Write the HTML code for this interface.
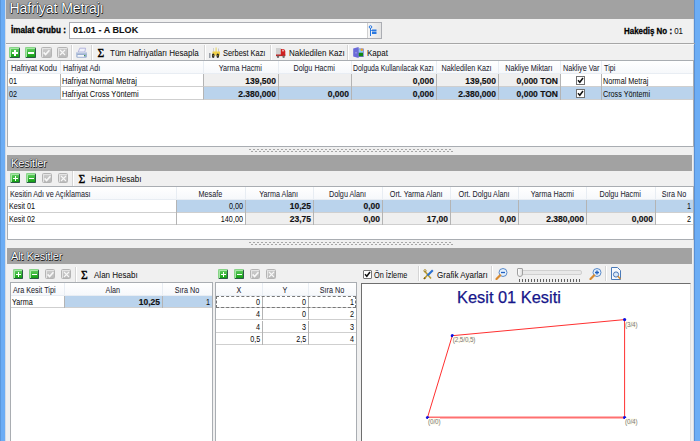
<!DOCTYPE html>
<html><head><meta charset="utf-8">
<style>
*{margin:0;padding:0;box-sizing:border-box}
html,body{width:700px;height:441px;overflow:hidden;background:#f0f0f0;font-family:"Liberation Sans",sans-serif;font-size:8px;color:#000}
body{position:relative}
.a{position:absolute}
.sx{display:inline-block}
.t{position:absolute;white-space:nowrap;line-height:11px;font-size:9.5px;color:#111;-webkit-text-stroke:0.05px #111}
.g{position:absolute;white-space:nowrap;line-height:10px;font-size:8.8px;color:#0a0a0a;-webkit-text-stroke:0.02px #000}
.gb{position:absolute;white-space:nowrap;line-height:10px;font-size:8.5px;font-weight:bold;color:#111;-webkit-text-stroke:0.15px #111}
.hd{position:absolute;white-space:nowrap;line-height:10px;font-size:8.8px;color:#1e1e30;-webkit-text-stroke:0.05px #1e1e30}
.bar{position:absolute;background:#a2a2a2;color:#fff;padding-left:3px;text-shadow:0 0 1px #101018,0 0 1px #101018,0.5px 0.5px 0.5px #202020}
.ic{position:absolute;width:11px;height:11px;border-radius:1.5px}
.ic i{position:absolute;background:#fff;display:block}
.plus{background:linear-gradient(#62d062,#139f13);border:1px solid;border-color:#86d486 #2c5a48 #2c5a48 #86d486;box-shadow:inset 1px 1px 0 #a8e6a8}
.gray{background:linear-gradient(#cdcdcd,#bababa);border:1px solid #b4b4b4;box-shadow:inset 1px 1px 0 #e4e4e4}
.cb{position:absolute;width:9px;height:9px;background:#fff;border:1px solid #707070}
</style></head><body>

<div class="a" style="left:0px;top:0px;width:5px;height:441px;background:#6cadf5;border-left:1px solid #5c98dc"></div>
<div class="a" style="left:5px;top:0px;width:1px;height:441px;background:#d4dce6"></div>
<div class="a" style="left:693px;top:0px;width:1px;height:441px;background:#d8dde3"></div>
<div class="a" style="left:694px;top:0px;width:6px;height:441px;background:#6cadf5;border-left:1px solid #5a90d4"></div>
<div class="bar" style="left:6px;top:0px;width:688px;height:19px;line-height:17px;font-size:14px;letter-spacing:-0.05px;padding-left:3.5px">Hafriyat Metrajı</div>
<div class="gb" style="left:11px;top:25px;font-size:9px;line-height:11px;color:#000;-webkit-text-stroke:0.35px #000"><span class="sx" style="transform:scaleX(0.9);transform-origin:0 0">İmalat Grubu :</span></div>
<div class="a" style="left:69px;top:22px;width:313px;height:17px;background:#fff;border:1px solid #abadb3"></div>
<div class="gb" style="left:72.5px;top:24px;font-size:9.5px;line-height:11px;color:#111;-webkit-text-stroke:0.12px #111;letter-spacing:0.05px;font-weight:bold"><span class="sx" style="transform:scaleX(0.95);transform-origin:0 0">01.01 - A BLOK</span></div>
<div class="a" style="left:367px;top:23px;width:14px;height:15px;background:linear-gradient(90deg,#f6f6f6,#e4e4e4);border-left:1px solid #d0d0d0"></div>
<svg class="a" style="left:368px;top:25px" width="10" height="12" viewBox="0 0 10 12"><circle cx="2.5" cy="2" r="1.3" fill="none" stroke="#2a78e0" stroke-width="1"/><path d="M2.5 3 V11" stroke="#2a78e0" stroke-width="1"/><rect x="4" y="4.5" width="4.5" height="2" fill="#2a78e0"/><rect x="4" y="7" width="4.5" height="2" fill="#2a78e0"/><path d="M2.5 5.5 H4" stroke="#2a78e0" stroke-width="0.8"/></svg>
<div class="t" style="left:483.5px;width:200px;text-align:right;top:26px;font-size:9px"><span class="sx" style="transform:scaleX(0.88);transform-origin:100% 0"><b style="-webkit-text-stroke:0.3px #000;color:#000">Hakediş No :</b> 01</span></div>
<div class="a" style="left:6px;top:43px;width:689px;height:1px;background:#a6a6a6"></div>
<div class="a" style="left:6px;top:44px;width:688px;height:1px;background:#f8f8f8"></div>
<div class="ic plus" style="left:9px;top:47px;width:11px;height:11px"><i style="left:2.15px;top:4.0px;width:5.7px;height:2px"></i><i style="left:4.0px;top:2.15px;width:2px;height:5.7px"></i></div>
<div class="ic plus" style="left:25px;top:47px;width:11px;height:11px"><i style="left:2.15px;top:4.0px;width:5.7px;height:2px"></i></div>
<div class="ic gray" style="left:41px;top:47px;width:11px;height:11px"><svg width="9" height="9" viewBox="0 0 9 9" style="position:absolute;left:0;top:0"><path d="M1.6 4.4 L3.6 6.6 L7.4 2.2" stroke="#f7f7f7" stroke-width="1.6" fill="none"/></svg></div>
<div class="ic gray" style="left:57px;top:47px;width:11px;height:11px"><svg width="9" height="9" viewBox="0 0 9 9" style="position:absolute;left:0;top:0"><path d="M2 2 L7 7 M7 2 L2 7" stroke="#f7f7f7" stroke-width="1.1" fill="none"/></svg></div>
<div class="a" style="left:71px;top:45px;width:1px;height:15px;background:#d5d5d5"></div>
<div class="a" style="left:72px;top:45px;width:1px;height:15px;background:#fff"></div>
<svg class="a" style="left:76px;top:47px" width="11" height="11" viewBox="0 0 11 11"><path d="M2.2 5 L3.8 1.2 H9.6 L8.8 5 Z" fill="#eef0fa" stroke="#a8a8d8" stroke-width="0.8"/><rect x="0.3" y="5" width="10.6" height="5.8" rx="1.2" fill="#9aaed0"/><rect x="1.5" y="8" width="6.5" height="1.8" fill="#f4f6fa"/><rect x="8" y="8" width="1.2" height="1" fill="#40a040"/><rect x="0.3" y="5" width="10.6" height="1.5" fill="#c8d2e6"/></svg>
<div class="a" style="left:91px;top:45px;width:1px;height:15px;background:#d5d5d5"></div>
<div class="a" style="left:92px;top:45px;width:1px;height:15px;background:#fff"></div>
<div class="a" style="left:97.5px;top:47px;font-family:'Liberation Serif',serif;font-size:11.5px;line-height:12px;color:#000;-webkit-text-stroke:0.35px #000">Σ</div>
<div class="t" style="left:110px;top:47px;"><span class="sx" style="transform:scaleX(0.845);transform-origin:0 0">Tüm Hafriyatları Hesapla</span></div>
<div class="a" style="left:204px;top:45px;width:1px;height:15px;background:#d5d5d5"></div>
<div class="a" style="left:205px;top:45px;width:1px;height:15px;background:#fff"></div>
<svg class="a" style="left:209px;top:47px" width="12" height="11" viewBox="0 0 12 11"><rect x="6.5" y="0.5" width="1.2" height="5" fill="#e8d870"/><rect x="4" y="1" width="1" height="4" fill="#d0d0d0"/><rect x="9" y="1.5" width="1" height="4" fill="#c8c8c8"/><rect x="3.5" y="4.5" width="7.5" height="4" fill="#f0d048"/><rect x="0" y="6" width="1.5" height="5" fill="#9aa0a8"/><ellipse cx="4.2" cy="8.8" rx="1.3" ry="2.2" fill="#222"/><ellipse cx="8.8" cy="8.8" rx="1.3" ry="2.2" fill="#222"/><circle cx="4.2" cy="8.8" r="0.5" fill="#e8c840"/><circle cx="8.8" cy="8.8" r="0.5" fill="#e8c840"/></svg>
<div class="t" style="left:223px;top:47px;"><span class="sx" style="transform:scaleX(0.78);transform-origin:0 0">Serbest Kazı</span></div>
<div class="a" style="left:270px;top:45px;width:1px;height:15px;background:#d5d5d5"></div>
<div class="a" style="left:271px;top:45px;width:1px;height:15px;background:#fff"></div>
<svg class="a" style="left:276px;top:48px" width="10" height="10" viewBox="0 0 10 10"><rect x="0" y="0" width="5.2" height="7" fill="#d0d0d0"/><path d="M4.8 1 H8 L9.3 3 V7.5 H4.8 Z" fill="#d02020"/><rect x="6.3" y="1.6" width="1.4" height="1.8" fill="#f0e0e0"/><rect x="0" y="6.5" width="9.3" height="1.6" fill="#c02020"/><circle cx="2" cy="8.8" r="1.2" fill="#707070"/><circle cx="7.6" cy="8.8" r="1.2" fill="#707070"/></svg>
<div class="t" style="left:288.5px;top:47px;"><span class="sx" style="transform:scaleX(0.845);transform-origin:0 0">Nakledilen Kazı</span></div>
<div class="a" style="left:347px;top:45px;width:1px;height:15px;background:#d5d5d5"></div>
<div class="a" style="left:348px;top:45px;width:1px;height:15px;background:#fff"></div>
<svg class="a" style="left:353px;top:47px" width="11" height="11" viewBox="0 0 11 11"><path d="M0.2 1.5 L5.6 0 V11 L0.2 9.5 Z" fill="#6a6ad8"/><rect x="5.2" y="1.5" width="5.5" height="8.5" fill="#6a70c8"/><rect x="5.8" y="2.2" width="4.2" height="3.6" fill="#8cc8f0"/><circle cx="8.8" cy="2.8" r="1.2" fill="#f0a020"/><rect x="5.8" y="5.8" width="4.2" height="3.4" fill="#108a10"/><rect x="2.5" y="5.2" width="1" height="1.2" fill="#c0c0e8"/></svg>
<div class="t" style="left:367px;top:47px;"><span class="sx" style="transform:scaleX(0.845);transform-origin:0 0">Kapat</span></div>
<div class="a" style="left:7px;top:60px;width:687px;height:87px;background:#fff;border:1px solid #a9adb2"></div>
<div class="a" style="left:8px;top:61px;width:685px;height:12px;background:linear-gradient(#ffffff,#f6f8fb)"></div>
<div class="a" style="left:8px;top:73px;width:685px;height:1px;background:#e8edf3"></div>
<div class="a" style="left:60px;top:61px;width:1px;height:12px;background:#e8edf3"></div>
<div class="a" style="left:203px;top:61px;width:1px;height:12px;background:#e8edf3"></div>
<div class="a" style="left:278px;top:61px;width:1px;height:12px;background:#e8edf3"></div>
<div class="a" style="left:351px;top:61px;width:1px;height:12px;background:#e8edf3"></div>
<div class="a" style="left:436px;top:61px;width:1px;height:12px;background:#e8edf3"></div>
<div class="a" style="left:498px;top:61px;width:1px;height:12px;background:#e8edf3"></div>
<div class="a" style="left:560px;top:61px;width:1px;height:12px;background:#e8edf3"></div>
<div class="a" style="left:601px;top:61px;width:1px;height:12px;background:#e8edf3"></div>
<div class="hd" style="left:11px;top:63px;"><span class="sx" style="transform:scaleX(0.86);transform-origin:0 0">Hafriyat Kodu</span></div>
<div class="hd" style="left:63px;top:63px;"><span class="sx" style="transform:scaleX(0.82);transform-origin:0 0">Hafriyat Adı</span></div>
<div class="hd" style="left:90.5px;width:300px;text-align:center;top:63px;"><span class="sx" style="transform:scaleX(0.82);transform-origin:50% 0">Yarma Hacmi</span></div>
<div class="hd" style="left:164.5px;width:300px;text-align:center;top:63px;"><span class="sx" style="transform:scaleX(0.82);transform-origin:50% 0">Dolgu Hacmi</span></div>
<div class="hd" style="left:243.5px;width:300px;text-align:center;top:63px;"><span class="sx" style="transform:scaleX(0.785);transform-origin:50% 0">Dolguda Kullanılacak Kazı</span></div>
<div class="hd" style="left:317.0px;width:300px;text-align:center;top:63px;"><span class="sx" style="transform:scaleX(0.82);transform-origin:50% 0">Nakledilen Kazı</span></div>
<div class="hd" style="left:379.0px;width:300px;text-align:center;top:63px;"><span class="sx" style="transform:scaleX(0.82);transform-origin:50% 0">Nakliye Miktarı</span></div>
<div class="hd" style="left:562.5px;top:63px;"><span class="sx" style="transform:scaleX(0.82);transform-origin:0 0">Nakliye Var</span></div>
<div class="hd" style="left:603.5px;top:63px;"><span class="sx" style="transform:scaleX(0.82);transform-origin:0 0">Tipi</span></div>
<div class="a" style="left:8px;top:74px;width:52px;height:12px;background:#fff"></div>
<div class="g" style="left:8.5px;top:75.5px;"><span class="sx" style="transform:scaleX(0.82);transform-origin:0 0">01</span></div>
<div class="a" style="left:60px;top:74px;width:143px;height:12px;background:#fff"></div>
<div class="g" style="left:61.5px;top:75.5px;"><span class="sx" style="transform:scaleX(0.85);transform-origin:0 0">Hafriyat Normal Metraj</span></div>
<div class="a" style="left:203px;top:74px;width:75px;height:12px;background:#efefef"></div>
<div class="gb" style="left:76px;width:200px;text-align:right;top:75.5px;"><span class="sx" style="transform:scaleX(1);transform-origin:100% 0">139,500</span></div>
<div class="a" style="left:278px;top:74px;width:73px;height:12px;background:#efefef"></div>
<div class="a" style="left:351px;top:74px;width:85px;height:12px;background:#efefef"></div>
<div class="gb" style="left:234px;width:200px;text-align:right;top:75.5px;"><span class="sx" style="transform:scaleX(1);transform-origin:100% 0">0,000</span></div>
<div class="a" style="left:436px;top:74px;width:62px;height:12px;background:#efefef"></div>
<div class="gb" style="left:296px;width:200px;text-align:right;top:75.5px;"><span class="sx" style="transform:scaleX(1);transform-origin:100% 0">139,500</span></div>
<div class="a" style="left:498px;top:74px;width:62px;height:12px;background:#efefef"></div>
<div class="gb" style="left:358px;width:200px;text-align:right;top:75.5px;"><span class="sx" style="transform:scaleX(1);transform-origin:100% 0">0,000 TON</span></div>
<div class="a" style="left:560px;top:74px;width:41px;height:12px;background:#fff"></div>
<div class="cb" style="left:576px;top:75.5px"><svg width="7" height="7" viewBox="0 0 7 7" style="position:absolute;left:0;top:0"><path d="M1 3.3 L2.8 5.3 L6 1" stroke="#111" stroke-width="1.5" fill="none"/></svg></div>
<div class="a" style="left:601px;top:74px;width:92px;height:12px;background:#fff"></div>
<div class="g" style="left:602.5px;top:75.5px;"><span class="sx" style="transform:scaleX(0.82);transform-origin:0 0">Normal Metraj</span></div>
<div class="a" style="left:8px;top:86px;width:685px;height:1px;background:#cfcfcf"></div>
<div class="a" style="left:60px;top:74px;width:1px;height:13px;background:#b4b4b4"></div>
<div class="a" style="left:203px;top:74px;width:1px;height:13px;background:#b4b4b4"></div>
<div class="a" style="left:278px;top:74px;width:1px;height:13px;background:#b4b4b4"></div>
<div class="a" style="left:351px;top:74px;width:1px;height:13px;background:#b4b4b4"></div>
<div class="a" style="left:436px;top:74px;width:1px;height:13px;background:#b4b4b4"></div>
<div class="a" style="left:498px;top:74px;width:1px;height:13px;background:#b4b4b4"></div>
<div class="a" style="left:560px;top:74px;width:1px;height:13px;background:#b4b4b4"></div>
<div class="a" style="left:601px;top:74px;width:1px;height:13px;background:#b4b4b4"></div>
<div class="a" style="left:8px;top:87px;width:52px;height:12px;background:#bad3ec"></div>
<div class="g" style="left:8.5px;top:88.5px;"><span class="sx" style="transform:scaleX(0.82);transform-origin:0 0">02</span></div>
<div class="a" style="left:60px;top:87px;width:143px;height:12px;background:#fff"></div>
<div class="g" style="left:61.5px;top:88.5px;"><span class="sx" style="transform:scaleX(0.85);transform-origin:0 0">Hafriyat Cross Yöntemi</span></div>
<div class="a" style="left:203px;top:87px;width:75px;height:12px;background:#bad3ec"></div>
<div class="gb" style="left:76px;width:200px;text-align:right;top:88.5px;"><span class="sx" style="transform:scaleX(1);transform-origin:100% 0">2.380,000</span></div>
<div class="a" style="left:278px;top:87px;width:73px;height:12px;background:#bad3ec"></div>
<div class="gb" style="left:149px;width:200px;text-align:right;top:88.5px;"><span class="sx" style="transform:scaleX(1);transform-origin:100% 0">0,000</span></div>
<div class="a" style="left:351px;top:87px;width:85px;height:12px;background:#bad3ec"></div>
<div class="gb" style="left:234px;width:200px;text-align:right;top:88.5px;"><span class="sx" style="transform:scaleX(1);transform-origin:100% 0">0,000</span></div>
<div class="a" style="left:436px;top:87px;width:62px;height:12px;background:#bad3ec"></div>
<div class="gb" style="left:296px;width:200px;text-align:right;top:88.5px;"><span class="sx" style="transform:scaleX(1);transform-origin:100% 0">2.380,000</span></div>
<div class="a" style="left:498px;top:87px;width:62px;height:12px;background:#bad3ec"></div>
<div class="gb" style="left:358px;width:200px;text-align:right;top:88.5px;"><span class="sx" style="transform:scaleX(1);transform-origin:100% 0">0,000 TON</span></div>
<div class="a" style="left:560px;top:87px;width:41px;height:12px;background:#bad3ec"></div>
<div class="cb" style="left:576px;top:88.5px"><svg width="7" height="7" viewBox="0 0 7 7" style="position:absolute;left:0;top:0"><path d="M1 3.3 L2.8 5.3 L6 1" stroke="#111" stroke-width="1.5" fill="none"/></svg></div>
<div class="a" style="left:601px;top:87px;width:92px;height:12px;background:#bad3ec"></div>
<div class="g" style="left:602.5px;top:88.5px;"><span class="sx" style="transform:scaleX(0.82);transform-origin:0 0">Cross Yöntemi</span></div>
<div class="a" style="left:8px;top:99px;width:685px;height:1px;background:#cfcfcf"></div>
<div class="a" style="left:60px;top:87px;width:1px;height:13px;background:#b4b4b4"></div>
<div class="a" style="left:203px;top:87px;width:1px;height:13px;background:#b4b4b4"></div>
<div class="a" style="left:278px;top:87px;width:1px;height:13px;background:#b4b4b4"></div>
<div class="a" style="left:351px;top:87px;width:1px;height:13px;background:#b4b4b4"></div>
<div class="a" style="left:436px;top:87px;width:1px;height:13px;background:#b4b4b4"></div>
<div class="a" style="left:498px;top:87px;width:1px;height:13px;background:#b4b4b4"></div>
<div class="a" style="left:560px;top:87px;width:1px;height:13px;background:#b4b4b4"></div>
<div class="a" style="left:601px;top:87px;width:1px;height:13px;background:#b4b4b4"></div>
<div class="a" style="left:60px;top:86px;width:144px;height:14px;border:1px solid #cfcfcf;border-left-color:#b4b4b4;border-right-color:#b4b4b4"></div>
<div class="a" style="left:249px;top:149px;width:202px;height:1px;background:repeating-linear-gradient(90deg,#a6a6a6 0 2px,transparent 2px 4px)"></div>
<div class="a" style="left:251px;top:151px;width:202px;height:1px;background:repeating-linear-gradient(90deg,#a6a6a6 0 2px,transparent 2px 4px)"></div>
<div class="bar" style="left:7px;top:155px;width:685px;height:16px;line-height:16.5px;font-size:11px;letter-spacing:-0.1px;padding-left:4px">Kesitler</div>
<div class="ic plus" style="left:10px;top:173px;width:10px;height:10px"><i style="left:2.0px;top:3.75px;width:5px;height:1.5px"></i><i style="left:3.75px;top:2.0px;width:1.5px;height:5px"></i></div>
<div class="ic plus" style="left:26px;top:173px;width:10px;height:10px"><i style="left:2.0px;top:3.75px;width:5px;height:1.5px"></i></div>
<div class="ic gray" style="left:42px;top:173px;width:10px;height:10px"><svg width="9" height="9" viewBox="0 0 9 9" style="position:absolute;left:0;top:0"><path d="M1.6 4.4 L3.6 6.6 L7.4 2.2" stroke="#f7f7f7" stroke-width="1.6" fill="none"/></svg></div>
<div class="ic gray" style="left:58px;top:173px;width:10px;height:10px"><svg width="9" height="9" viewBox="0 0 9 9" style="position:absolute;left:0;top:0"><path d="M2 2 L7 7 M7 2 L2 7" stroke="#f7f7f7" stroke-width="1.1" fill="none"/></svg></div>
<div class="a" style="left:72px;top:171px;width:1px;height:16px;background:#d5d5d5"></div>
<div class="a" style="left:73px;top:171px;width:1px;height:16px;background:#fff"></div>
<div class="a" style="left:78.5px;top:173px;font-family:'Liberation Serif',serif;font-size:11.5px;line-height:12px;color:#000;-webkit-text-stroke:0.35px #000">Σ</div>
<div class="t" style="left:91px;top:173px;"><span class="sx" style="transform:scaleX(0.845);transform-origin:0 0">Hacim Hesabı</span></div>
<div class="a" style="left:7px;top:186px;width:687px;height:54px;background:#fff;border:1px solid #a9adb2"></div>
<div class="a" style="left:8px;top:187px;width:685px;height:12px;background:linear-gradient(#ffffff,#f6f8fb)"></div>
<div class="a" style="left:8px;top:199px;width:685px;height:1px;background:#e8edf3"></div>
<div class="a" style="left:176px;top:187px;width:1px;height:12px;background:#e8edf3"></div>
<div class="a" style="left:245px;top:187px;width:1px;height:12px;background:#e8edf3"></div>
<div class="a" style="left:313px;top:187px;width:1px;height:12px;background:#e8edf3"></div>
<div class="a" style="left:382px;top:187px;width:1px;height:12px;background:#e8edf3"></div>
<div class="a" style="left:450px;top:187px;width:1px;height:12px;background:#e8edf3"></div>
<div class="a" style="left:518px;top:187px;width:1px;height:12px;background:#e8edf3"></div>
<div class="a" style="left:586px;top:187px;width:1px;height:12px;background:#e8edf3"></div>
<div class="a" style="left:655px;top:187px;width:1px;height:12px;background:#e8edf3"></div>
<div class="hd" style="left:9.5px;top:189px;"><span class="sx" style="transform:scaleX(0.82);transform-origin:0 0">Kesitin Adı ve Açıklaması</span></div>
<div class="hd" style="left:60.5px;width:300px;text-align:center;top:189px;"><span class="sx" style="transform:scaleX(0.82);transform-origin:50% 0">Mesafe</span></div>
<div class="hd" style="left:129.0px;width:300px;text-align:center;top:189px;"><span class="sx" style="transform:scaleX(0.82);transform-origin:50% 0">Yarma Alanı</span></div>
<div class="hd" style="left:197.5px;width:300px;text-align:center;top:189px;"><span class="sx" style="transform:scaleX(0.82);transform-origin:50% 0">Dolgu Alanı</span></div>
<div class="hd" style="left:266.0px;width:300px;text-align:center;top:189px;"><span class="sx" style="transform:scaleX(0.82);transform-origin:50% 0">Ort. Yarma Alanı</span></div>
<div class="hd" style="left:334.0px;width:300px;text-align:center;top:189px;"><span class="sx" style="transform:scaleX(0.82);transform-origin:50% 0">Ort. Dolgu Alanı</span></div>
<div class="hd" style="left:402.0px;width:300px;text-align:center;top:189px;"><span class="sx" style="transform:scaleX(0.82);transform-origin:50% 0">Yarma Hacmi</span></div>
<div class="hd" style="left:470.5px;width:300px;text-align:center;top:189px;"><span class="sx" style="transform:scaleX(0.82);transform-origin:50% 0">Dolgu Hacmi</span></div>
<div class="hd" style="left:524.0px;width:300px;text-align:center;top:189px;"><span class="sx" style="transform:scaleX(0.82);transform-origin:50% 0">Sıra No</span></div>
<div class="a" style="left:8px;top:200px;width:168px;height:12px;background:#fff"></div>
<div class="g" style="left:8.5px;top:201px;"><span class="sx" style="transform:scaleX(0.82);transform-origin:0 0">Kesit 01</span></div>
<div class="a" style="left:176px;top:200px;width:69px;height:12px;background:#bad3ec"></div>
<div class="g" style="left:43px;width:200px;text-align:right;top:201px;"><span class="sx" style="transform:scaleX(0.82);transform-origin:100% 0">0,00</span></div>
<div class="a" style="left:245px;top:200px;width:68px;height:12px;background:#bad3ec"></div>
<div class="gb" style="left:111px;width:200px;text-align:right;top:201px;"><span class="sx" style="transform:scaleX(1);transform-origin:100% 0">10,25</span></div>
<div class="a" style="left:313px;top:200px;width:69px;height:12px;background:#bad3ec"></div>
<div class="gb" style="left:180px;width:200px;text-align:right;top:201px;"><span class="sx" style="transform:scaleX(1);transform-origin:100% 0">0,00</span></div>
<div class="a" style="left:382px;top:200px;width:68px;height:12px;background:#bad3ec"></div>
<div class="a" style="left:450px;top:200px;width:68px;height:12px;background:#bad3ec"></div>
<div class="a" style="left:518px;top:200px;width:68px;height:12px;background:#bad3ec"></div>
<div class="a" style="left:586px;top:200px;width:69px;height:12px;background:#bad3ec"></div>
<div class="a" style="left:655px;top:200px;width:38px;height:12px;background:#bad3ec"></div>
<div class="g" style="left:491px;width:200px;text-align:right;top:201px;"><span class="sx" style="transform:scaleX(0.82);transform-origin:100% 0">1</span></div>
<div class="a" style="left:8px;top:212px;width:685px;height:1px;background:#cfcfcf"></div>
<div class="a" style="left:176px;top:200px;width:1px;height:13px;background:#b4b4b4"></div>
<div class="a" style="left:245px;top:200px;width:1px;height:13px;background:#b4b4b4"></div>
<div class="a" style="left:313px;top:200px;width:1px;height:13px;background:#b4b4b4"></div>
<div class="a" style="left:382px;top:200px;width:1px;height:13px;background:#b4b4b4"></div>
<div class="a" style="left:450px;top:200px;width:1px;height:13px;background:#b4b4b4"></div>
<div class="a" style="left:518px;top:200px;width:1px;height:13px;background:#b4b4b4"></div>
<div class="a" style="left:586px;top:200px;width:1px;height:13px;background:#b4b4b4"></div>
<div class="a" style="left:655px;top:200px;width:1px;height:13px;background:#b4b4b4"></div>
<div class="a" style="left:8px;top:213px;width:168px;height:11px;background:#fff"></div>
<div class="g" style="left:8.5px;top:214px;"><span class="sx" style="transform:scaleX(0.82);transform-origin:0 0">Kesit 02</span></div>
<div class="a" style="left:176px;top:213px;width:69px;height:11px;background:#fff"></div>
<div class="g" style="left:43px;width:200px;text-align:right;top:214px;"><span class="sx" style="transform:scaleX(0.82);transform-origin:100% 0">140,00</span></div>
<div class="a" style="left:245px;top:213px;width:68px;height:11px;background:#efefef"></div>
<div class="gb" style="left:111px;width:200px;text-align:right;top:214px;"><span class="sx" style="transform:scaleX(1);transform-origin:100% 0">23,75</span></div>
<div class="a" style="left:313px;top:213px;width:69px;height:11px;background:#efefef"></div>
<div class="gb" style="left:180px;width:200px;text-align:right;top:214px;"><span class="sx" style="transform:scaleX(1);transform-origin:100% 0">0,00</span></div>
<div class="a" style="left:382px;top:213px;width:68px;height:11px;background:#efefef"></div>
<div class="gb" style="left:248px;width:200px;text-align:right;top:214px;"><span class="sx" style="transform:scaleX(1);transform-origin:100% 0">17,00</span></div>
<div class="a" style="left:450px;top:213px;width:68px;height:11px;background:#efefef"></div>
<div class="gb" style="left:316px;width:200px;text-align:right;top:214px;"><span class="sx" style="transform:scaleX(1);transform-origin:100% 0">0,00</span></div>
<div class="a" style="left:518px;top:213px;width:68px;height:11px;background:#efefef"></div>
<div class="gb" style="left:384px;width:200px;text-align:right;top:214px;"><span class="sx" style="transform:scaleX(1);transform-origin:100% 0">2.380,000</span></div>
<div class="a" style="left:586px;top:213px;width:69px;height:11px;background:#efefef"></div>
<div class="gb" style="left:453px;width:200px;text-align:right;top:214px;"><span class="sx" style="transform:scaleX(1);transform-origin:100% 0">0,000</span></div>
<div class="a" style="left:655px;top:213px;width:38px;height:11px;background:#fff"></div>
<div class="g" style="left:491px;width:200px;text-align:right;top:214px;"><span class="sx" style="transform:scaleX(0.82);transform-origin:100% 0">2</span></div>
<div class="a" style="left:8px;top:224px;width:685px;height:1px;background:#cfcfcf"></div>
<div class="a" style="left:176px;top:213px;width:1px;height:12px;background:#b4b4b4"></div>
<div class="a" style="left:245px;top:213px;width:1px;height:12px;background:#b4b4b4"></div>
<div class="a" style="left:313px;top:213px;width:1px;height:12px;background:#b4b4b4"></div>
<div class="a" style="left:382px;top:213px;width:1px;height:12px;background:#b4b4b4"></div>
<div class="a" style="left:450px;top:213px;width:1px;height:12px;background:#b4b4b4"></div>
<div class="a" style="left:518px;top:213px;width:1px;height:12px;background:#b4b4b4"></div>
<div class="a" style="left:586px;top:213px;width:1px;height:12px;background:#b4b4b4"></div>
<div class="a" style="left:655px;top:213px;width:1px;height:12px;background:#b4b4b4"></div>
<div class="a" style="left:249px;top:242px;width:202px;height:1px;background:repeating-linear-gradient(90deg,#a6a6a6 0 2px,transparent 2px 4px)"></div>
<div class="a" style="left:251px;top:244px;width:202px;height:1px;background:repeating-linear-gradient(90deg,#a6a6a6 0 2px,transparent 2px 4px)"></div>
<div class="bar" style="left:7px;top:248px;width:685px;height:16px;line-height:16.5px;font-size:11px;letter-spacing:-0.1px;padding-left:4px">Alt Kesitler</div>
<div class="ic plus" style="left:13px;top:269px;width:10px;height:10px"><i style="left:2.0px;top:3.75px;width:5px;height:1.5px"></i><i style="left:3.75px;top:2.0px;width:1.5px;height:5px"></i></div>
<div class="ic plus" style="left:29px;top:269px;width:10px;height:10px"><i style="left:2.0px;top:3.75px;width:5px;height:1.5px"></i></div>
<div class="ic gray" style="left:45px;top:269px;width:10px;height:10px"><svg width="9" height="9" viewBox="0 0 9 9" style="position:absolute;left:0;top:0"><path d="M1.6 4.4 L3.6 6.6 L7.4 2.2" stroke="#f7f7f7" stroke-width="1.6" fill="none"/></svg></div>
<div class="ic gray" style="left:61px;top:269px;width:10px;height:10px"><svg width="9" height="9" viewBox="0 0 9 9" style="position:absolute;left:0;top:0"><path d="M2 2 L7 7 M7 2 L2 7" stroke="#f7f7f7" stroke-width="1.1" fill="none"/></svg></div>
<div class="a" style="left:75px;top:267px;width:1px;height:15px;background:#d5d5d5"></div>
<div class="a" style="left:76px;top:267px;width:1px;height:15px;background:#fff"></div>
<div class="a" style="left:81.0px;top:269px;font-family:'Liberation Serif',serif;font-size:11.5px;line-height:12px;color:#000;-webkit-text-stroke:0.35px #000">Σ</div>
<div class="t" style="left:94px;top:269px;"><span class="sx" style="transform:scaleX(0.845);transform-origin:0 0">Alan Hesabı</span></div>
<div class="a" style="left:10px;top:282px;width:203px;height:168px;background:#fff;border:1px solid #a9adb2"></div>
<div class="a" style="left:11px;top:283px;width:201px;height:12px;background:linear-gradient(#ffffff,#f6f8fb)"></div>
<div class="a" style="left:11px;top:295px;width:201px;height:1px;background:#e8edf3"></div>
<div class="a" style="left:64px;top:283px;width:1px;height:12px;background:#e8edf3"></div>
<div class="a" style="left:162px;top:283px;width:1px;height:12px;background:#e8edf3"></div>
<div class="hd" style="left:13px;top:285px;"><span class="sx" style="transform:scaleX(0.82);transform-origin:0 0">Ara Kesit Tipi</span></div>
<div class="hd" style="left:-37.0px;width:300px;text-align:center;top:285px;"><span class="sx" style="transform:scaleX(0.82);transform-origin:50% 0">Alan</span></div>
<div class="hd" style="left:37.0px;width:300px;text-align:center;top:285px;"><span class="sx" style="transform:scaleX(0.82);transform-origin:50% 0">Sıra No</span></div>
<div class="a" style="left:11px;top:296px;width:53px;height:11px;background:#fff"></div>
<div class="a" style="left:64px;top:296px;width:98px;height:11px;background:#bad3ec"></div>
<div class="a" style="left:162px;top:296px;width:50px;height:11px;background:#bad3ec"></div>
<div class="g" style="left:11.5px;top:297px;"><span class="sx" style="transform:scaleX(0.82);transform-origin:0 0">Yarma</span></div>
<div class="gb" style="left:-40px;width:200px;text-align:right;top:297px;"><span class="sx" style="transform:scaleX(1);transform-origin:100% 0">10,25</span></div>
<div class="g" style="left:10px;width:200px;text-align:right;top:297px;"><span class="sx" style="transform:scaleX(0.82);transform-origin:100% 0">1</span></div>
<div class="a" style="left:11px;top:307px;width:201px;height:1px;background:#cfcfcf"></div>
<div class="a" style="left:64px;top:296px;width:1px;height:12px;background:#b4b4b4"></div>
<div class="a" style="left:162px;top:296px;width:1px;height:12px;background:#b4b4b4"></div>
<div class="ic plus" style="left:218px;top:269px;width:10px;height:10px"><i style="left:2.0px;top:3.75px;width:5px;height:1.5px"></i><i style="left:3.75px;top:2.0px;width:1.5px;height:5px"></i></div>
<div class="ic plus" style="left:234px;top:269px;width:10px;height:10px"><i style="left:2.0px;top:3.75px;width:5px;height:1.5px"></i></div>
<div class="ic gray" style="left:250px;top:269px;width:10px;height:10px"><svg width="9" height="9" viewBox="0 0 9 9" style="position:absolute;left:0;top:0"><path d="M1.6 4.4 L3.6 6.6 L7.4 2.2" stroke="#f7f7f7" stroke-width="1.6" fill="none"/></svg></div>
<div class="ic gray" style="left:266px;top:269px;width:10px;height:10px"><svg width="9" height="9" viewBox="0 0 9 9" style="position:absolute;left:0;top:0"><path d="M2 2 L7 7 M7 2 L2 7" stroke="#f7f7f7" stroke-width="1.1" fill="none"/></svg></div>
<div class="a" style="left:215px;top:282px;width:142px;height:168px;background:#fff;border:1px solid #a9adb2"></div>
<div class="a" style="left:216px;top:283px;width:140px;height:12px;background:linear-gradient(#ffffff,#f6f8fb)"></div>
<div class="a" style="left:216px;top:295px;width:140px;height:1px;background:#e8edf3"></div>
<div class="a" style="left:262px;top:283px;width:1px;height:12px;background:#e8edf3"></div>
<div class="a" style="left:308px;top:283px;width:1px;height:12px;background:#e8edf3"></div>
<div class="hd" style="left:89.0px;width:300px;text-align:center;top:285px;"><span class="sx" style="transform:scaleX(0.82);transform-origin:50% 0">X</span></div>
<div class="hd" style="left:135.0px;width:300px;text-align:center;top:285px;"><span class="sx" style="transform:scaleX(0.82);transform-origin:50% 0">Y</span></div>
<div class="hd" style="left:182.0px;width:300px;text-align:center;top:285px;"><span class="sx" style="transform:scaleX(0.82);transform-origin:50% 0">Sıra No</span></div>
<div class="g" style="left:60px;width:200px;text-align:right;top:297px;"><span class="sx" style="transform:scaleX(0.82);transform-origin:100% 0">0</span></div>
<div class="g" style="left:106px;width:200px;text-align:right;top:297px;"><span class="sx" style="transform:scaleX(0.82);transform-origin:100% 0">0</span></div>
<div class="g" style="left:154px;width:200px;text-align:right;top:297px;"><span class="sx" style="transform:scaleX(0.82);transform-origin:100% 0">1</span></div>
<div class="a" style="left:216px;top:307px;width:140px;height:1px;background:#cfcfcf"></div>
<div class="a" style="left:262px;top:296px;width:1px;height:12px;background:#b4b4b4"></div>
<div class="a" style="left:308px;top:296px;width:1px;height:12px;background:#b4b4b4"></div>
<div class="g" style="left:60px;width:200px;text-align:right;top:309px;"><span class="sx" style="transform:scaleX(0.82);transform-origin:100% 0">4</span></div>
<div class="g" style="left:106px;width:200px;text-align:right;top:309px;"><span class="sx" style="transform:scaleX(0.82);transform-origin:100% 0">0</span></div>
<div class="g" style="left:154px;width:200px;text-align:right;top:309px;"><span class="sx" style="transform:scaleX(0.82);transform-origin:100% 0">2</span></div>
<div class="a" style="left:216px;top:319px;width:140px;height:1px;background:#cfcfcf"></div>
<div class="a" style="left:262px;top:308px;width:1px;height:12px;background:#b4b4b4"></div>
<div class="a" style="left:308px;top:308px;width:1px;height:12px;background:#b4b4b4"></div>
<div class="g" style="left:60px;width:200px;text-align:right;top:322px;"><span class="sx" style="transform:scaleX(0.82);transform-origin:100% 0">4</span></div>
<div class="g" style="left:106px;width:200px;text-align:right;top:322px;"><span class="sx" style="transform:scaleX(0.82);transform-origin:100% 0">3</span></div>
<div class="g" style="left:154px;width:200px;text-align:right;top:322px;"><span class="sx" style="transform:scaleX(0.82);transform-origin:100% 0">3</span></div>
<div class="a" style="left:216px;top:332px;width:140px;height:1px;background:#cfcfcf"></div>
<div class="a" style="left:262px;top:321px;width:1px;height:12px;background:#b4b4b4"></div>
<div class="a" style="left:308px;top:321px;width:1px;height:12px;background:#b4b4b4"></div>
<div class="g" style="left:60px;width:200px;text-align:right;top:334px;"><span class="sx" style="transform:scaleX(0.82);transform-origin:100% 0">0,5</span></div>
<div class="g" style="left:106px;width:200px;text-align:right;top:334px;"><span class="sx" style="transform:scaleX(0.82);transform-origin:100% 0">2,5</span></div>
<div class="g" style="left:154px;width:200px;text-align:right;top:334px;"><span class="sx" style="transform:scaleX(0.82);transform-origin:100% 0">4</span></div>
<div class="a" style="left:216px;top:344px;width:140px;height:1px;background:#cfcfcf"></div>
<div class="a" style="left:262px;top:333px;width:1px;height:12px;background:#b4b4b4"></div>
<div class="a" style="left:308px;top:333px;width:1px;height:12px;background:#b4b4b4"></div>
<div class="a" style="left:216px;top:296px;width:140px;height:12px;border:1px dashed #777"></div>
<div class="cb" style="left:363px;top:270px;border-color:#777;border-radius:1px"><svg width="7" height="7" viewBox="0 0 7 7" style="position:absolute;left:0;top:0"><path d="M1 3.3 L2.8 5.3 L6 1" stroke="#111" stroke-width="1.5" fill="none"/></svg></div>
<div class="t" style="left:374px;top:269px;"><span class="sx" style="transform:scaleX(0.77);transform-origin:0 0">Ön İzleme</span></div>
<div class="a" style="left:418px;top:266px;width:1px;height:15px;background:#d5d5d5"></div>
<div class="a" style="left:419px;top:266px;width:1px;height:15px;background:#fff"></div>
<svg class="a" style="left:423px;top:269px" width="11" height="11" viewBox="0 0 11 11"><path d="M1.5 2 L8 9.5 M1.5 9.5 L4.5 6" stroke="#b89a30" stroke-width="1.6"/><circle cx="2" cy="1.8" r="1.2" fill="none" stroke="#a08020" stroke-width="0.8"/><path d="M4.5 6.5 L9.8 1.2" stroke="#2a70d0" stroke-width="2"/><path d="M0.8 10 L2.2 8.6" stroke="#806010" stroke-width="1.5"/></svg>
<div class="t" style="left:437px;top:269px;"><span class="sx" style="transform:scaleX(0.845);transform-origin:0 0">Grafik Ayarları</span></div>
<div class="a" style="left:491px;top:266px;width:1px;height:15px;background:#d5d5d5"></div>
<div class="a" style="left:492px;top:266px;width:1px;height:15px;background:#fff"></div>
<svg class="a" style="left:495px;top:267px" width="13" height="13" viewBox="0 0 13 13"><circle cx="8" cy="5.5" r="4" fill="#e4f0fc" stroke="#5a8ac8" stroke-width="1"/><path d="M6 5.5 H10" stroke="#2060c0" stroke-width="1.3"/><path d="M5.2 8.3 L1.5 12" stroke="#d88a30" stroke-width="2.2" stroke-linecap="round"/></svg>
<div class="a" style="left:517px;top:270px;width:65px;height:5px;background:#e8e8e8;border:1px solid #d0d0d0;border-radius:2px"></div>
<div class="a" style="left:517px;top:268px;width:6px;height:9px;background:linear-gradient(90deg,#fdfdfd,#e0e0e0);border:1px solid #a0a0a0;border-radius:1px 1px 3px 3px"></div>
<div class="a" style="left:519px;top:279px;width:61px;height:3px;background-image:linear-gradient(90deg,#606060 1px,transparent 1px);background-size:3px 3px"></div>
<svg class="a" style="left:589px;top:267px" width="13" height="13" viewBox="0 0 13 13"><circle cx="8" cy="5.5" r="4" fill="#e4f0fc" stroke="#5a8ac8" stroke-width="1"/><path d="M6 5.5 H10 M8 3.5 V7.5" stroke="#2060c0" stroke-width="1.3"/><path d="M5.2 8.3 L1.5 12" stroke="#d88a30" stroke-width="2.2" stroke-linecap="round"/></svg>
<div class="a" style="left:605px;top:266px;width:1px;height:15px;background:#d5d5d5"></div>
<div class="a" style="left:606px;top:266px;width:1px;height:15px;background:#fff"></div>
<svg class="a" style="left:611px;top:267px" width="11" height="13" viewBox="0 0 11 13"><path d="M0.5 0.5 H6.5 L9.5 3.5 V12.5 H0.5 Z" fill="#f6f9fd" stroke="#4a7ab8"/><circle cx="5" cy="7.5" r="2.6" fill="#d8e8f8" stroke="#3a6ab0" stroke-width="0.9"/><path d="M6.8 9.3 L9.5 12" stroke="#d08a30" stroke-width="1.6"/></svg>
<div class="a" style="left:361px;top:283px;width:330px;height:170px;background:#fff;border:1px solid #6e6e6e;border-right-color:#e0e0e0"></div>
<div class="a" style="left:457px;top:287.5px;white-space:nowrap;font-size:16.4px;line-height:18px;color:#16168a;-webkit-text-stroke:0.25px #16168a">Kesit 01 Kesiti</div>
<svg class="a" style="left:361px;top:282px" width="333" height="170" viewBox="361 282 333 170">
<polyline points="427.5,417.5 452.3,335.7 624.6,319.6 624.6,417.5" fill="none" stroke="#ff3030" stroke-width="1"/>
<line x1="427.5" y1="417.5" x2="624.6" y2="417.5" stroke="#ff7070" stroke-width="1.8"/>
<circle cx="427.5" cy="417.5" r="1.6" fill="#1010e0"/>
<circle cx="452.3" cy="335.7" r="1.6" fill="#1010e0"/>
<circle cx="624.6" cy="319.6" r="1.6" fill="#1010e0"/>
<circle cx="624.6" cy="417.5" r="1.6" fill="#1010e0"/>
</svg>
<div class="a" style="left:428px;top:418px;white-space:nowrap;font-size:6.3px;line-height:7px;color:#777;background:#fffdf0;letter-spacing:-0.1px">(0/0)</div>
<div class="a" style="left:625px;top:418px;white-space:nowrap;font-size:6.3px;line-height:7px;color:#777;background:#fffdf0;letter-spacing:-0.1px">(0/4)</div>
<div class="a" style="left:625px;top:320.5px;white-space:nowrap;font-size:6.3px;line-height:7px;color:#777;background:#fffdf0;letter-spacing:-0.1px">(3/4)</div>
<div class="a" style="left:452.8px;top:336px;white-space:nowrap;font-size:6.3px;line-height:7px;color:#777;background:#fffdf0;letter-spacing:-0.1px">(2,5/0,5)</div>
</body></html>
